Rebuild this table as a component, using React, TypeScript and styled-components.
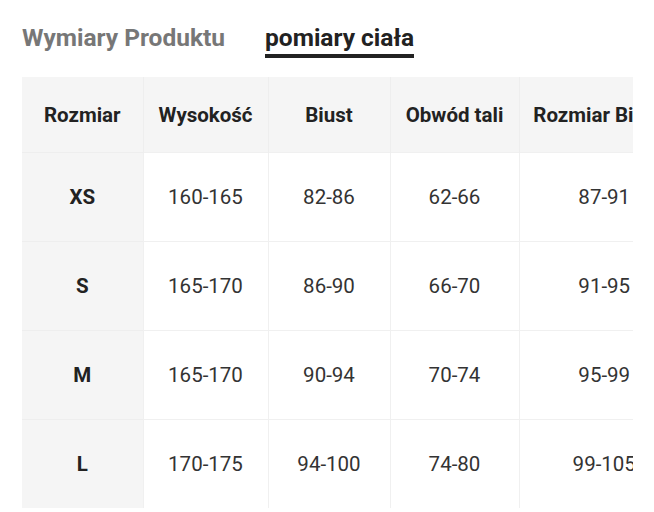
import React from "react";
import styled, { createGlobalStyle } from "styled-components";

const Global = createGlobalStyle`
  html, body { margin: 0; padding: 0; background: #ffffff; }
  body { font-family: Roboto, "Noto Sans", Arial, sans-serif; }
`;

const Page = styled.div`
  padding: 24px 0 0 22px;
  width: 654px;
  height: 512px;
  box-sizing: border-box;
  overflow: hidden;
`;

const Tabs = styled.div`
  display: flex;
  gap: 40px;
  align-items: flex-start;
`;

const Tab = styled.div<{ $active?: boolean }>`
  font-size: 24.5px;
  line-height: 28px;
  font-weight: 700;
  color: ${(p) => (p.$active ? "#222222" : "#777777")};
  padding-bottom: 2px;
  border-bottom: 4px solid ${(p) => (p.$active ? "#222222" : "transparent")};
  white-space: nowrap;
`;

const TableClip = styled.div`
  margin-top: 19px;
  width: 611px;
  overflow: hidden;
`;

const Table = styled.table`
  border-collapse: collapse;
  table-layout: fixed;
  width: 667px;
`;

const HeadCell = styled.th`
  background: #f5f5f5;
  height: 75px;
  padding: 0;
  font-size: 20.5px;
  font-weight: 700;
  color: #222222;
  text-align: center;
  white-space: nowrap;
  border-left: 1px solid #eeeeee;
  &:first-child { border-left: none; }
`;

const SizeCell = styled.td`
  background: #f5f5f5;
  height: 88px;
  padding: 0;
  font-size: 20.5px;
  font-weight: 700;
  color: #222222;
  text-align: center;
  border-top: 1px solid #eeeeee;
`;

const ValueCell = styled.td`
  background: #ffffff;
  height: 88px;
  padding: 0;
  font-size: 20.5px;
  font-weight: 400;
  color: #333333;
  text-align: center;
  white-space: nowrap;
  border-top: 1px solid #f0f0f0;
  border-left: 1px solid #f0f0f0;
`;

const widths = [121, 125, 122, 129, 170];
const headers = ["Rozmiar", "Wysokość", "Biust", "Obwód tali", "Rozmiar Bioder"];
const rows = [
  ["XS", "160-165", "82-86", "62-66", "87-91"],
  ["S", "165-170", "86-90", "66-70", "91-95"],
  ["M", "165-170", "90-94", "70-74", "95-99"],
  ["L", "170-175", "94-100", "74-80", "99-105"],
];

export default function App() {
  return (
    <>
      <Global />
      <Page>
        <Tabs>
          <Tab>Wymiary Produktu</Tab>
          <Tab $active>pomiary ciała</Tab>
        </Tabs>
        <TableClip>
          <Table>
            <colgroup>
              {widths.map((w, i) => (
                <col key={i} style={{ width: w }} />
              ))}
            </colgroup>
            <thead>
              <tr>
                {headers.map((h) => (
                  <HeadCell key={h}>{h}</HeadCell>
                ))}
              </tr>
            </thead>
            <tbody>
              {rows.map((r) => (
                <tr key={r[0]}>
                  <SizeCell>{r[0]}</SizeCell>
                  {r.slice(1).map((v, i) => (
                    <ValueCell key={i}>{v}</ValueCell>
                  ))}
                </tr>
              ))}
            </tbody>
          </Table>
        </TableClip>
      </Page>
    </>
  );
}
